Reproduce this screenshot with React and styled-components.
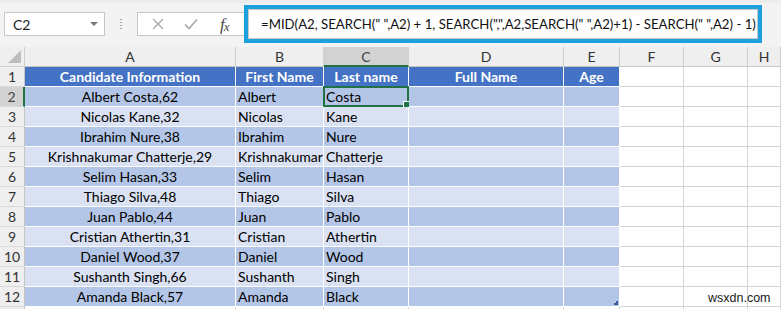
import React from "react";
import styled, { createGlobalStyle, css } from "styled-components";

const GlobalStyle = createGlobalStyle`
  html, body { margin: 0; padding: 0; background: #fff; }
  body { font-family: "Lato", "Noto Sans", sans-serif; }
  * { box-sizing: border-box; }
`;

const GREEN = "#217346";

const Page = styled.div`
  position: relative;
  width: 781px;
  height: 309px;
  overflow: hidden;
  background: #fff;
`;

const Toolbar = styled.div`
  display: flex;
  align-items: flex-start;
  height: 47px;
  background: #f3f3f3;
  border-top: 3px solid #ececec;
`;

const NameBox = styled.div`
  display: flex;
  align-items: center;
  justify-content: space-between;
  margin: 9px 0 0 4px;
  width: 101px;
  height: 24px;
  padding: 0 6px 0 8px;
  background: #fff;
  border: 1px solid #c6c6c6;
  font-size: 14px;
  color: #222;
`;

const Caret = styled.span`
  width: 0;
  height: 0;
  border-left: 4px solid transparent;
  border-right: 4px solid transparent;
  border-top: 4px solid #7a7a7a;
`;

const Grip = styled.span`
  margin: 15px 0 0 15px;
  width: 2px;
  height: 12px;
  background-image: radial-gradient(circle, #a8a8a8 0.9px, transparent 1px);
  background-size: 2px 3px;
`;

const FxBox = styled.div`
  display: flex;
  align-items: center;
  margin: 9px 0 0 15px;
  width: 110px;
  height: 24px;
  padding-left: 14px;
  gap: 20px;
  background: #fff;
  border: 1px solid #c6c6c6;
  border-right: none;
`;

const Fx = styled.span`
  margin-left: 2px;
  font-family: "Liberation Serif", "DejaVu Serif", serif;
  font-style: italic;
  font-size: 17px;
  line-height: 1;
  color: #4a4a4a;
  letter-spacing: -1px;
  sub {
    font-size: 13px;
    vertical-align: baseline;
    position: relative;
    top: 1px;
  }
`;

const FormulaFrame = styled.div`
  margin: 2px 0 0 -3px;
  width: 518px;
  height: 38px;
  border: 4px solid #1ea0dc;
  background: #fff;
  padding: 0;
`;

const FormulaInput = styled.div`
  height: 100%;
  border: 1px solid #c6c6c6;
  display: flex;
  align-items: center;
  padding-left: 12px;
  font-size: 13.2px;
  color: #111;
  white-space: pre;
  overflow: hidden;
`;

const Sheet = styled.div`
  display: grid;
  grid-template-columns: 25px 211px 88px 85px 155px 56px 64px 64px 33px;
  grid-auto-rows: 20px;
`;

const variants = {
  corner: css`
    background: #efefef;
    border-right: 1px solid #cfcfcf;
    border-bottom: 1px solid #cfcfcf;
  `,
  colhead: css`
    background: #efefef;
    color: #333;
    font-size: 14px;
    justify-content: center;
    border-right: 1px solid #d0d0d0;
    border-bottom: 1px solid #c6c6c6;
  `,
  rowhead: css`
    background: #efefef;
    color: #333;
    font-size: 14px;
    justify-content: center;
    border-right: 1px solid #c6c6c6;
    border-bottom: 1px solid #d8d8d8;
  `,
  thead: css`
    background: #4472c4;
    color: #fff;
    font-weight: 700;
    font-size: 14px;
    justify-content: center;
    border-right: 1px solid #fff;
    border-bottom: 1px solid #fff;
  `,
  dark: css`
    background: #b4c6e7;
    color: #000;
    border-right: 1px solid #fff;
    border-bottom: 1px solid #fff;
  `,
  light: css`
    background: #d9e1f2;
    color: #000;
    border-right: 1px solid #fff;
    border-bottom: 1px solid #fff;
  `,
  empty: css`
    background: #fff;
    border-right: 1px solid #d4d4d4;
    border-bottom: 1px solid #d4d4d4;
  `,
};

const Cell = styled.div`
  position: relative;
  display: flex;
  align-items: center;
  padding: 0 2px;
  font-size: 14px;
  white-space: nowrap;
  overflow: visible;
  ${(p) => variants[p.$kind]}
  ${(p) => p.$center && css`justify-content: center;`}
  ${(p) =>
    p.$selCol &&
    css`
      background: #d2d2d2;
      border-bottom: 2px solid ${GREEN};
      color: #444;
    `}
  ${(p) =>
    p.$selRow &&
    css`
      background: #d2d2d2;
      border-right: 2px solid ${GREEN};
      color: #444;
    `}
`;

const Corner = styled.span`
  position: absolute;
  right: 3px;
  bottom: 3px;
  width: 0;
  height: 0;
  border-left: 13px solid transparent;
  border-bottom: 13px solid #bdbdbd;
`;

const Selection = styled.span`
  position: absolute;
  left: -1px;
  top: -1px;
  right: -1px;
  bottom: -1px;
  border: 2px solid ${GREEN};
  pointer-events: none;
  &::after {
    content: "";
    position: absolute;
    right: -5px;
    bottom: -5px;
    width: 7px;
    height: 7px;
    background: ${GREEN};
    border: 1px solid #fff;
  }
`;

const ResizeMark = styled.span`
  position: absolute;
  right: 1px;
  bottom: 1px;
  width: 4px;
  height: 4px;
  border-right: 2px solid #3e5c99;
  border-bottom: 2px solid #3e5c99;
`;

const Watermark = styled.span`
  position: absolute;
  left: 708px;
  top: 291px;
  font-family: "Liberation Sans", Arial, sans-serif;
  font-size: 12.5px;
  color: #1a1a1a;
`;

const cols = ["A", "B", "C", "D", "E", "F", "G", "H"];

const data = [
  ["Albert Costa,62", "Albert", "Costa"],
  ["Nicolas Kane,32", "Nicolas", "Kane"],
  ["Ibrahim Nure,38", "Ibrahim", "Nure"],
  ["Krishnakumar Chatterje,29", "Krishnakumar", "Chatterje"],
  ["Selim Hasan,33", "Selim", "Hasan"],
  ["Thiago Silva,48", "Thiago", "Silva"],
  ["Juan Pablo,44", "Juan", "Pablo"],
  ["Cristian Athertin,31", "Cristian", "Athertin"],
  ["Daniel Wood,37", "Daniel", "Wood"],
  ["Sushanth Singh,66", "Sushanth", "Singh"],
  ["Amanda Black,57", "Amanda", "Black"],
];

const headers = ["Candidate Information", "First Name", "Last name", "Full Name", "Age"];

const CrossIcon = () => (
  <svg width="12" height="12" viewBox="0 0 12 12">
    <path d="M1 1 L11 11 M11 1 L1 11" stroke="#a6a6a6" strokeWidth="1.3" fill="none" />
  </svg>
);

const CheckIcon = () => (
  <svg width="14" height="12" viewBox="0 0 14 12">
    <path d="M1 6.5 L5 10.5 L13 1.5" stroke="#a6a6a6" strokeWidth="1.6" fill="none" />
  </svg>
);

export default function App() {
  const formula = `=MID(A2, SEARCH(" ",A2) + 1, SEARCH(",",A2,SEARCH(" ",A2)+1) - SEARCH(" ",A2) - 1)`;
  return (
    <Page>
      <GlobalStyle />
      <Toolbar>
        <NameBox>
          <span>C2</span>
          <Caret />
        </NameBox>
        <Grip />
        <FxBox>
          <CrossIcon />
          <CheckIcon />
          <Fx>
            f<sub>x</sub>
          </Fx>
        </FxBox>
        <FormulaFrame>
          <FormulaInput>{formula}</FormulaInput>
        </FormulaFrame>
      </Toolbar>
      <Sheet>
        <Cell $kind="corner">
          <Corner />
        </Cell>
        {cols.map((c) => (
          <Cell key={c} $kind="colhead" $selCol={c === "C"}>
            {c}
          </Cell>
        ))}
        <Cell $kind="rowhead">1</Cell>
        {headers.map((h) => (
          <Cell key={h} $kind="thead">
            {h}
          </Cell>
        ))}
        <Cell $kind="empty" />
        <Cell $kind="empty" />
        <Cell $kind="empty" />
        {data.map((row, i) => {
          const kind = i % 2 === 0 ? "dark" : "light";
          const last = i === data.length - 1;
          return (
            <React.Fragment key={i}>
              <Cell $kind="rowhead" $selRow={i === 0}>
                {i + 2}
              </Cell>
              <Cell $kind={kind} $center>
                {row[0]}
              </Cell>
              <Cell $kind={kind}>{row[1]}</Cell>
              <Cell $kind={kind}>
                {row[2]}
                {i === 0 && <Selection />}
              </Cell>
              <Cell $kind={kind} />
              <Cell $kind={kind}>{last && <ResizeMark />}</Cell>
              <Cell $kind="empty" />
              <Cell $kind="empty" />
              <Cell $kind="empty" />
            </React.Fragment>
          );
        })}
        <Cell $kind="rowhead" />
        {cols.map((c) => (
          <Cell key={c} $kind="empty" />
        ))}
      </Sheet>
      <Watermark>wsxdn.com</Watermark>
    </Page>
  );
}
